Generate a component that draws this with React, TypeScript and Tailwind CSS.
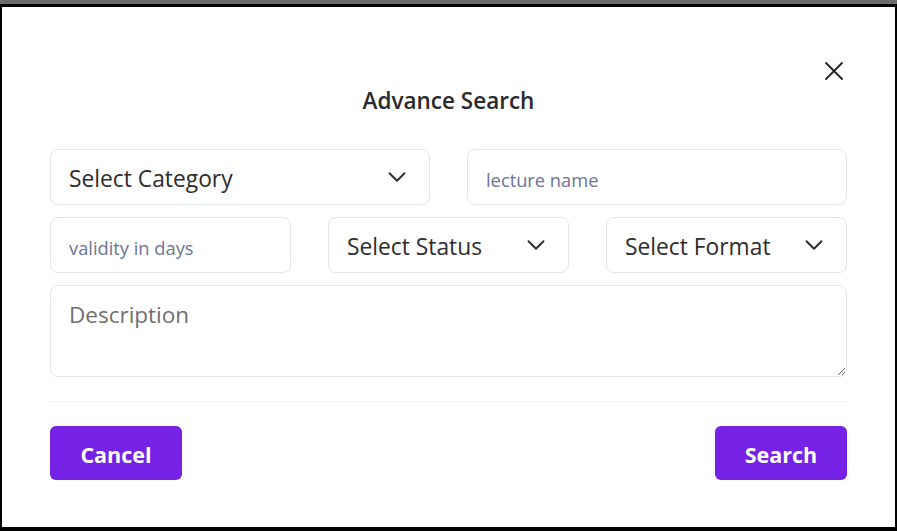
import { ChevronDown } from "lucide-react";

function SelectBox({ label }: { label: string }) {
  return (
    <div className="flex h-[56px] items-center justify-between rounded-lg border border-[#e2e5ea] bg-white pl-[18px] pr-[17px]">
      <span className="pt-[4px] text-[22.8px] text-[#2d2d2d]">{label}</span>
      <ChevronDown size={30} strokeWidth={1.5} className="text-[#2d2d2d]" />
    </div>
  );
}

function TextBox({ placeholder }: { placeholder: string }) {
  return (
    <input
      placeholder={placeholder}
      className="h-[56px] w-full rounded-lg border border-[#e2e5ea] bg-white px-[18px] pt-[4px] text-[18.3px] text-[#2d2d2d] outline-none placeholder:text-[#6b7595]"
    />
  );
}

export default function App() {
  return (
    <div className="h-[531px] w-[897px] bg-[#6b6b6b] pt-[4px] font-['Open_Sans',sans-serif]">
      <div className="relative h-[527px] border-x-2 border-t-[3px] border-b-4 border-black bg-white px-[48px]">
        {/* close */}
        <button className="absolute right-[52px] top-[55px] p-0">
          <svg width="18" height="18" viewBox="0 0 18 18" fill="none" stroke="#222" strokeWidth="1.8" strokeLinecap="round">
            <path d="M1 1 L17 17 M17 1 L1 17" />
          </svg>
        </button>

        <h2 className="pt-[79px] text-center text-[22.5px] font-semibold leading-[30px] text-[#2a2a2a]">Advance Search</h2>

        <div className="mt-[33px] flex flex-col gap-[12px]">
          <div className="grid grid-cols-2 gap-x-[37px]">
            <SelectBox label="Select Category" />
            <TextBox placeholder="lecture name" />
          </div>
          <div className="grid grid-cols-3 gap-x-[37px]">
            <TextBox placeholder="validity in days" />
            <SelectBox label="Select Status" />
            <SelectBox label="Select Format" />
          </div>
          <textarea
            placeholder="Description"
            className="h-[92px] w-full rounded-lg border border-[#e2e5ea] bg-white px-[18px] py-[12px] text-[22.5px] text-[#2d2d2d] outline-none placeholder:text-[#6f6f6f]"
          />
        </div>

        <div className="mt-[24px] border-t border-[#f0f1f3]" />

        <div className="mt-[24px] flex items-center justify-between">
          <button className="h-[54px] w-[132px] rounded-md bg-[#7522e6] pt-[4px] text-[21.5px] font-bold text-white">Cancel</button>
          <button className="h-[54px] w-[132px] rounded-md bg-[#7522e6] pt-[4px] text-[21.5px] font-bold text-white">Search</button>
        </div>
      </div>
    </div>
  );
}
